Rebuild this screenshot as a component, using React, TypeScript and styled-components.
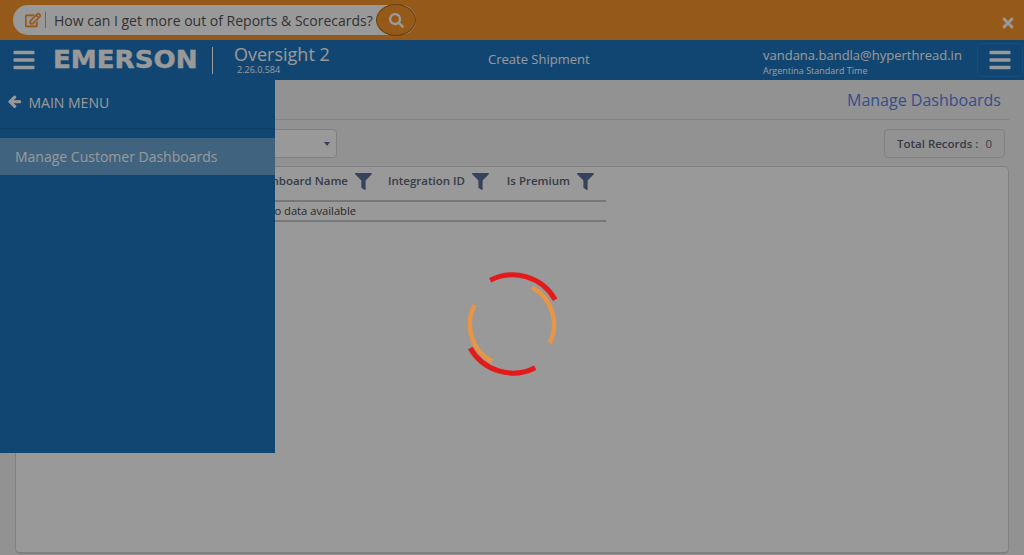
import React from "react";
import styled, { createGlobalStyle } from "styled-components";
import { FaArrowLeft, FaBars, FaFilter, FaRegEdit, FaSearch, FaTimes } from "react-icons/fa";

const GlobalStyle = createGlobalStyle`
  html, body {
    margin: 0;
    padding: 0;
    height: 100%;
    overflow: hidden;
    background: #f4f4f4;
    font-family: "Open Sans", "Liberation Sans", sans-serif;
  }
  #root {
    height: 100%;
  }
`;

const Page = styled.div`
  position: relative;
  width: 1024px;
  height: 555px;
  overflow: hidden;
`;

const SurveyBar = styled.div`
  height: 40px;
  background: #f8962b;
  display: flex;
  align-items: center;
  justify-content: space-between;
  padding: 0 8px 0 13px;
  box-sizing: border-box;
`;

const SurveyPill = styled.div`
  width: 403px;
  height: 30px;
  background: #fff;
  border-radius: 15px;
  display: flex;
  align-items: center;
  padding-left: 12px;
  box-sizing: border-box;
  position: relative;
  color: #555;
  font-size: 14px;
  white-space: nowrap;
  svg.edit {
    color: #f8962b;
    font-size: 16px;
    flex: none;
    stroke: currentColor;
    stroke-width: 20px;
  }
`;

const PillDivider = styled.span`
  width: 1px;
  height: 16px;
  background: #f8962b;
  margin: 0 8px 0 4px;
`;

const SearchCircle = styled.span`
  position: absolute;
  left: 363px;
  top: -1px;
  width: 40px;
  height: 32px;
  border-radius: 50%;
  background: #f8962b;
  border: 1px solid #b36a17;
  box-sizing: border-box;
  display: flex;
  align-items: center;
  justify-content: center;
  color: #fff;
  font-size: 15px;
`;

const CloseIcon = styled(FaTimes)`
  color: #fff;
  font-size: 16px;
  margin-top: 5px;
`;

const Header = styled.header`
  height: 40px;
  background: #1e75be;
  color: #fff;
  display: flex;
  align-items: center;
  padding-left: 12px;
  box-sizing: border-box;
`;

const MenuIcon = styled(FaBars)`
  font-size: 24px;
  flex: none;
`;

const Logo = styled.div`
  font-family: "DejaVu Sans", sans-serif;
  font-weight: 700;
  font-size: 24px;
  line-height: 24px;
  margin-left: 17px;
  width: 145px;
  white-space: nowrap;
  flex: none;
  transform: scaleX(1.087);
  transform-origin: left center;
  -webkit-text-stroke: 0.4px #fff;
`;

const LogoDivider = styled.span`
  width: 1px;
  height: 27px;
  background: #fff;
  margin: 0 21px 0 14px;
  flex: none;
`;

const Product = styled.div`
  width: 254px;
  flex: none;
  font-size: 18px;
  line-height: 22px;
  padding-bottom: 2px;
  span {
    display: block;
    font-size: 9px;
    line-height: 10px;
    margin-left: 3px;
  }
`;

const HeaderAction = styled.div`
  width: 275px;
  flex: none;
  font-size: 13px;
  margin-bottom: 2px;
`;

const UserBlock = styled.div`
  flex: 1;
  font-size: 13px;
  line-height: 16px;
  padding-top: 5px;
  small {
    display: block;
    font-size: 9px;
    line-height: 14px;
    margin-top: 1px;
  }
`;

const HeaderMenuButton = styled.div`
  width: 46px;
  height: 34px;
  margin-right: 1px;
  border: 1px solid #2a82cb;
  border-radius: 4px;
  box-sizing: border-box;
  display: flex;
  align-items: center;
  justify-content: center;
`;

const Content = styled.main`
  padding: 0 15px;
`;

const TitleRow = styled.div`
  height: 39px;
  border-bottom: 1px solid #d8d8d8;
  display: flex;
  align-items: center;
  justify-content: flex-end;
  padding-right: 8px;
`;

const PageTitle = styled.h1`
  margin: 0;
  font-size: 16px;
  font-weight: 400;
  color: #5a82ea;
`;

const Toolbar = styled.div`
  display: flex;
  justify-content: space-between;
  padding: 9px 4px 8px 0;
  height: 29px;
`;

const SelectBox = styled.div`
  width: 322px;
  height: 29px;
  background: #fff;
  border: 1px solid #d5d5d5;
  border-radius: 4px;
  box-sizing: border-box;
  display: flex;
  align-items: center;
  justify-content: flex-end;
  padding-right: 6px;
  &::after {
    content: "";
    border: 3.5px solid transparent;
    border-top: 4px solid #5a6f9a;
    border-bottom: 0;
  }
`;

const TotalBox = styled.div`
  width: 121px;
  height: 29px;
  border: 1px solid #d5d5d5;
  border-radius: 4px;
  box-sizing: border-box;
  display: flex;
  align-items: center;
  justify-content: center;
  font-size: 11.5px;
  font-weight: 600;
  color: #5a6579;
  span {
    font-weight: 400;
    margin-left: 7px;
  }
`;

const Card = styled.section`
  height: 388px;
  background: #fff;
  border: 1px solid #d5d5d5;
  border-bottom-width: 2px;
  border-radius: 5px;
  box-sizing: border-box;
`;

const Table = styled.div`
  width: 590px;
`;

const HeadRow = styled.div`
  height: 35px;
  padding-bottom: 7px;
  box-sizing: border-box;
  display: grid;
  grid-template-columns: 356px 117px 105px 1fr;
  align-items: center;
  border-bottom: 2px solid #c4c6cc;
`;

const HeadCell = styled.div`
  display: flex;
  align-items: center;
  justify-content: flex-end;
  gap: 7px;
  font-size: 11.5px;
  font-weight: 600;
  color: #5a6579;
  white-space: nowrap;
  svg {
    color: #5a7099;
    font-size: 17px;
    margin-top: 2px;
  }
`;

const EmptyRow = styled.div`
  height: 18px;
  line-height: 18px;
  padding-left: 250px;
  font-size: 11.2px;
  color: #444;
  border-bottom: 2px solid #c4c6cc;
`;

const Dim = styled.div`
  position: absolute;
  inset: 0;
  background: rgba(0, 0, 0, 0.4);
`;

const SideMenu = styled.nav`
  position: absolute;
  left: 0;
  top: 80px;
  width: 275px;
  height: 373px;
  background: #1e75be;
  color: #fff;
`;

const BackRow = styled.div`
  height: 49px;
  padding-bottom: 4px;
  box-sizing: border-box;
  border-bottom: 1px solid #1a69ab;
  display: flex;
  align-items: center;
  gap: 7px;
  padding-left: 8px;
  font-size: 14px;
  svg {
    font-size: 13.5px;
    stroke: currentColor;
    stroke-width: 40px;
  }
`;

const MenuItem = styled.div`
  margin-top: 9px;
  height: 37px;
  background: rgba(255, 255, 255, 0.35);
  display: flex;
  align-items: center;
  padding-left: 15px;
  font-size: 14px;
`;

const Spinner = styled.svg`
  position: absolute;
  left: 462px;
  top: 274px;
  width: 100px;
  height: 100px;
  overflow: visible;
`;

export default function App() {
  return (
    <Page>
      <GlobalStyle />
      <SurveyBar>
        <SurveyPill>
          <FaRegEdit className="edit" />
          <PillDivider />
          How can I get more out of Reports &amp; Scorecards?
          <SearchCircle>
            <FaSearch />
          </SearchCircle>
        </SurveyPill>
        <CloseIcon />
      </SurveyBar>
      <Header>
        <MenuIcon />
        <Logo>EMERSON</Logo>
        <LogoDivider />
        <Product>
          Oversight 2
          <span>2.26.0.584</span>
        </Product>
        <HeaderAction>Create Shipment</HeaderAction>
        <UserBlock>
          vandana.bandla@hyperthread.in
          <small>Argentina Standard Time</small>
        </UserBlock>
        <HeaderMenuButton>
          <MenuIcon />
        </HeaderMenuButton>
      </Header>
      <Content>
        <TitleRow>
          <PageTitle>Manage Dashboards</PageTitle>
        </TitleRow>
        <Toolbar>
          <SelectBox />
          <TotalBox>
            Total Records :<span>0</span>
          </TotalBox>
        </Toolbar>
        <Card>
          <Table>
            <HeadRow>
              <HeadCell>
                Dashboard Name
                <FaFilter />
              </HeadCell>
              <HeadCell>
                Integration ID
                <FaFilter />
              </HeadCell>
              <HeadCell>
                Is Premium
                <FaFilter />
              </HeadCell>
            </HeadRow>
            <EmptyRow>No data available</EmptyRow>
          </Table>
        </Card>
      </Content>
      <SideMenu>
        <BackRow>
          <FaArrowLeft />
          MAIN MENU
        </BackRow>
        <MenuItem>Manage Customer Dashboards</MenuItem>
      </SideMenu>
      <Dim />
      <Spinner viewBox="0 0 100 100" fill="none">
        <path d="M27.7 6.3 A49 49 0 0 1 92.7 25.7 M7.7 74 A49 49 0 0 0 72.7 93.7" stroke="#e41a1a" strokeWidth="5" transform="translate(0.5 0)" />
        <path d="M70.3 13.5 A42 42 0 0 1 87.7 69 M12.7 31 A42 42 0 0 0 30 87.5" stroke="#e89545" strokeWidth="4.5" />
      </Spinner>
    </Page>
  );
}
